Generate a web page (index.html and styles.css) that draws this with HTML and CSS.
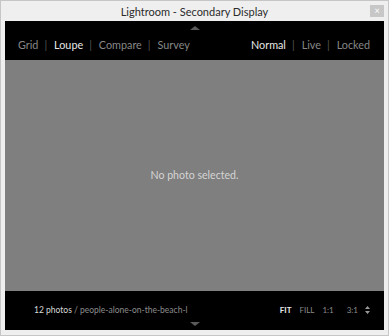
FILE: index.html
```html
<!DOCTYPE html>
<html lang="en">
<head>
	<meta charset="UTF-8">
	<title>Lightroom - Secondary Display</title>
	<link rel="stylesheet" href="styles.css">
</head>
<body>
	<div class="window">
		<div class="titlebar">
			<span class="title">Lightroom - Secondary Display</span>
			<span class="close">&times;</span>
		</div>
		<div class="panel">
			<div class="topbar">
				<span class="arrow-up"></span>
				<ul class="views">
					<li>Grid</li>
					<li class="sep">|</li>
					<li class="on">Loupe</li>
					<li class="sep">|</li>
					<li>Compare</li>
					<li class="sep">|</li>
					<li>Survey</li>
				</ul>
				<ul class="modes">
					<li class="on">Normal</li>
					<li class="sep">|</li>
					<li>Live</li>
					<li class="sep">|</li>
					<li>Locked</li>
				</ul>
			</div>
			<div class="stage">No photo selected.</div>
			<div class="bottombar">
				<div class="info"><span class="count">12 photos</span> / people-alone-on-the-beach-l</div>
				<ul class="zoom">
					<li class="on">FIT</li>
					<li>FILL</li>
					<li>1:1</li>
					<li class="ratio">3:1</li>
					<li class="spin">
						<svg width="5" height="8" viewBox="0 0 5 8"><path d="M2.5 0L5 3H0z M2.5 8L0 5h5z" fill="#9a9a9a"/></svg>
					</li>
				</ul>
				<span class="arrow-down"></span>
			</div>
		</div>
	</div>
</body>
</html>
```
FILE: styles.css
```css
*{
	box-sizing:border-box;
}
body{
	margin:0;
	background:#fff;
	font-family:Lato,"Open Sans","Liberation Sans",sans-serif;
}
ul{
	list-style-type:none;
	margin:0;
	padding:0;
	display:flex;
}
.window{
	width:389px;
	height:336px;
	background:#efefef;
	border:1px solid #c6c6c6;
	display:flex;
	flex-direction:column;
}
.titlebar{
	position:relative;
	height:20px;
	display:flex;
	align-items:center;
	justify-content:center;
	padding-top:1px;
	font-size:11px;
	color:#2b2b2b;
}
.close{
	position:absolute;
	top:4px;
	right:4px;
	width:14px;
	height:12px;
	background:#c7c7c7;
	color:#fff;
	font-size:9px;
	line-height:12px;
	text-align:center;
}
.panel{
	margin:0 4px;
	height:309px;
	display:flex;
	flex-direction:column;
}
.topbar{
	position:relative;
	height:39px;
	background:#000;
	display:flex;
	justify-content:space-between;
	align-items:center;
	padding:8px 14px 0 13px;
	font-size:10.8px;
	color:#888;
}
.topbar .sep{
	color:#555;
	margin:0 7px 0 6px;
}
.topbar .on{
	color:#e8e8e8;
}
.arrow-up{
	position:absolute;
	top:5px;
	left:185px;
	border:4px solid transparent;
	border-top:0;
	border-left-width:5px;
	border-right-width:5px;
	border-bottom-color:#5a5a5a;
}
.stage{
	flex:1;
	background:#7f7f7f;
	color:#d4d4d4;
	font-size:10.6px;
	display:flex;
	align-items:center;
	justify-content:center;
	padding-bottom:1px;
}
.bottombar{
	position:relative;
	height:39px;
	background:#000;
	display:flex;
	justify-content:space-between;
	align-items:center;
	padding:0 14px 1px 29px;
	font-size:8.5px;
	color:#8c8c8c;
}
.info .count{
	color:#d8d8d8;
}
.zoom{
	align-items:center;
	font-size:8px;
	color:#8a8a8a;
}
.zoom li{
	margin-left:8px;
}
.zoom .on{
	color:#e8e8e8;
	font-weight:bold;
}
.zoom .ratio{
	margin-left:13px;
}
.zoom .spin{
	display:flex;
	margin-left:7px;
}
.arrow-down{
	position:absolute;
	bottom:4px;
	left:185px;
	border:4px solid transparent;
	border-bottom:0;
	border-left-width:5px;
	border-right-width:5px;
	border-top-color:#5a5a5a;
}
```
